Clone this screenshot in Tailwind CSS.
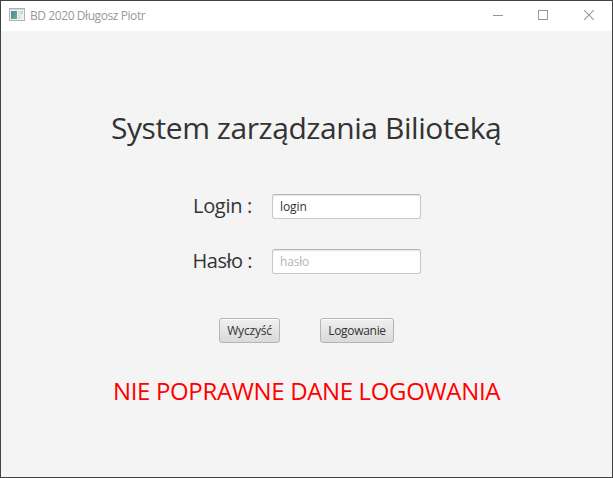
<!DOCTYPE html>
<html lang="pl">
<head>
<meta charset="utf-8">
<title>BD 2020 Długosz Piotr</title>
<script src="https://cdn.jsdelivr.net/npm/@tailwindcss/browser@4"></script>
</head>
<body class="h-[478px] w-[613px] overflow-hidden font-['Open_Sans','Noto_Sans',sans-serif] text-[#333]">
<div class="flex h-full w-full flex-col border border-[#434143] bg-[#f4f4f4]">
  <header class="flex h-[30px] shrink-0 items-center bg-white pl-2">
    <svg class="mb-[3px] h-[13px] w-[16px] shrink-0" viewBox="0 0 16 13" shape-rendering="crispEdges">
      <defs><linearGradient id="pane" x1="0" y1="0" x2="1" y2="1"><stop offset="0" stop-color="#4d82ab"/><stop offset="1" stop-color="#65b586"/></linearGradient></defs>
      <rect x=".5" y=".5" width="15" height="12" fill="#f2f2f2" stroke="#b0b0b0"/>
      <rect x="1" y="1" width="14" height="1" fill="#d3d6d8"/>
      <rect x="2" y="3" width="6" height="8" fill="url(#pane)"/>
      <rect x="9" y="3" width="3" height="8" fill="#dce3e6"/>
      <rect x="12" y="3" width="2" height="3" fill="#b9d8c5"/>
    </svg>
    <span class="ml-[5px] text-[12px] leading-[16px] tracking-[-0.42px] whitespace-nowrap text-[#999]">BD 2020 Długosz Piotr</span>
    <div class="ml-auto flex h-full text-[#999]">
      <span class="flex w-[45px] items-center justify-center"><svg class="mb-[2px] h-[10px] w-[10px]" viewBox="0 0 10 10" shape-rendering="crispEdges"><path d="M0 5.5H10" stroke="currentColor"/></svg></span>
      <span class="flex w-[45px] items-center justify-center"><svg class="mb-[2px] h-[10px] w-[10px]" viewBox="0 0 10 10" shape-rendering="crispEdges"><rect x=".5" y=".5" width="9" height="9" fill="none" stroke="currentColor"/></svg></span>
      <span class="flex w-[47px] items-center justify-center"><svg class="mb-[2px] h-[10px] w-[10px]" viewBox="0 0 10 10"><path d="M0 0L10 10M10 0L0 10" stroke="currentColor" stroke-width="1.1"/></svg></span>
    </div>
  </header>
  <main class="flex flex-col">
    <h1 class="mt-[76px] pl-[110px] text-[30px] leading-[42px] tracking-[-0.43px] whitespace-nowrap">System zarządzania Bilioteką</h1>
    <form class="mt-[45px] flex flex-col">
      <div class="flex h-[25px] items-center">
        <label class="w-[251px] pb-[2px] text-right text-[20px] leading-[25px] tracking-[-0.3px] whitespace-nowrap">Login :</label>
        <div class="ml-[20px] flex h-[25px] w-[149px] items-center rounded-[3px] border border-[#c8c8c8] border-t-[#b5b5b5] bg-white px-[7px] text-[12px] leading-[16px] tracking-[-0.1px] shadow-[inset_0_1px_1px_#e6e6e6]">login</div>
      </div>
      <div class="mt-[30px] flex h-[25px] items-center">
        <label class="w-[251px] pb-[2px] text-right text-[20px] leading-[25px] tracking-[-0.5px] whitespace-nowrap">Hasło :</label>
        <div class="ml-[20px] flex h-[25px] w-[149px] items-center rounded-[3px] border border-[#c8c8c8] border-t-[#b5b5b5] bg-white px-[7px] pt-px text-[12px] leading-[16px] tracking-[-0.2px] text-[#b5b5b5] shadow-[inset_0_1px_1px_#e6e6e6]">hasło</div>
      </div>
      <div class="mt-[44px] flex gap-[40px] pl-[218px]">
        <button type="button" class="flex h-[25px] w-[61px] items-center justify-center rounded-[3px] border border-[#b5b5b5] bg-linear-to-b from-[#f0f0f0] to-[#dadada] text-[12px] leading-[16px] tracking-[-0.2px] shadow-[inset_0_1px_0_#fafafa]">Wyczyść</button>
        <button type="button" class="flex h-[25px] w-[74px] items-center justify-center rounded-[3px] border border-[#b5b5b5] bg-linear-to-b from-[#f0f0f0] to-[#dadada] text-[12px] leading-[16px] tracking-[-0.3px] shadow-[inset_0_1px_0_#fafafa]">Logowanie</button>
      </div>
    </form>
    <p class="mt-[32px] pl-[112px] text-[24px] leading-[32px] tracking-[-0.35px] whitespace-nowrap text-[#f00]">NIE POPRAWNE DANE LOGOWANIA</p>
  </main>
</div>
</body>
</html>
